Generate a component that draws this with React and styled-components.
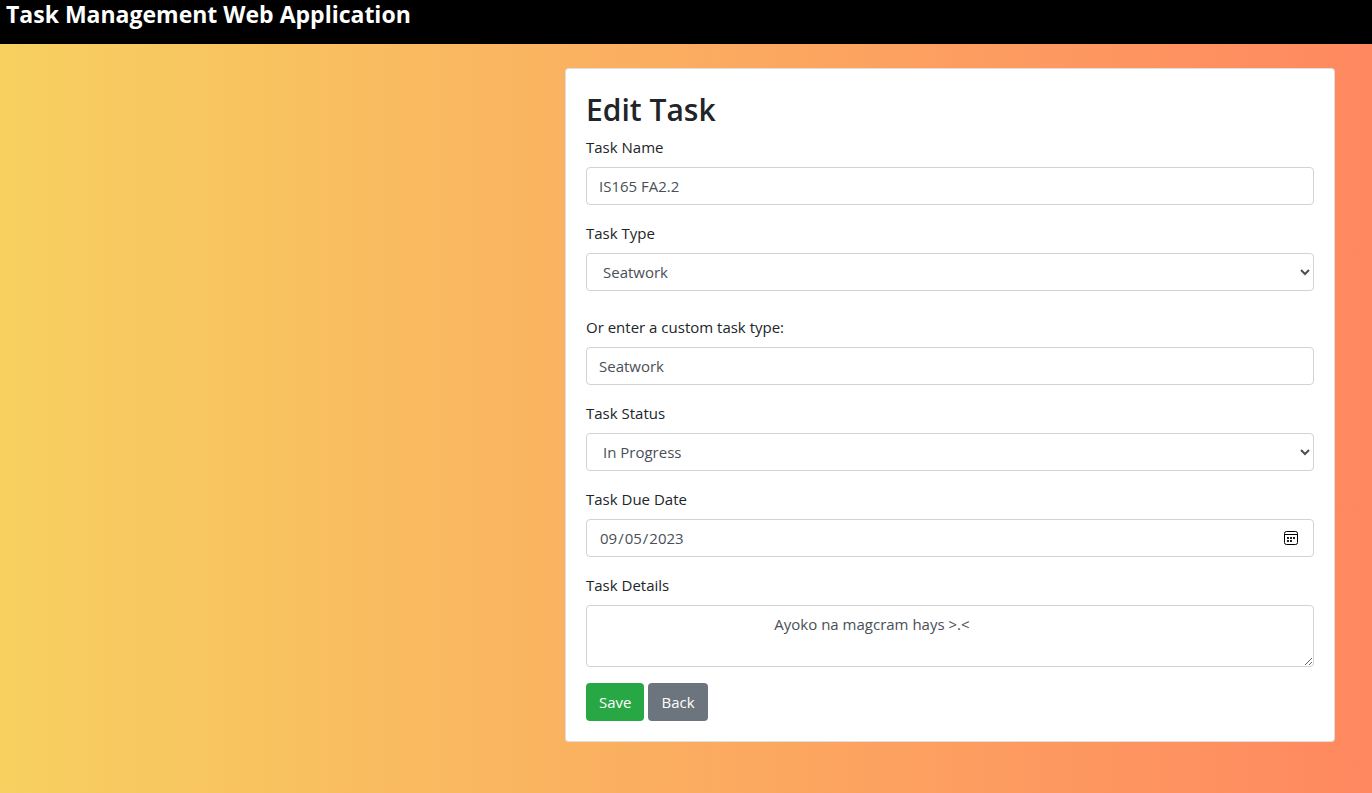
import React from "react";
import styled, { createGlobalStyle, css } from "styled-components";

const GlobalStyle = createGlobalStyle`
  *, *::before, *::after { box-sizing: border-box; }
  body {
    margin: 0;
    min-height: 100vh;
    font: 400 15px/24px "Open Sans", "Noto Sans", sans-serif;
    color: #212529;
    background: linear-gradient(to right, #f7d060, #ff8860);
  }
`;

const Header = styled.header`
  height: 44px;
  padding: 0 6px;
  background: #000;
`;

const Brand = styled.h1`
  margin: 0;
  color: #fff;
  font-size: 23px;
  line-height: 28px;
  font-weight: 700;
`;

const Main = styled.main`
  display: grid;
  grid-template-columns: 565fr 770fr 37fr;
  padding: 24px 0;
`;

const Card = styled.form`
  grid-column: 2;
  padding: 20px;
  background: #fff;
  border: 1px solid rgba(0, 0, 0, 0.125);
  border-radius: 4px;
`;

const Title = styled.h2`
  margin: 0 0 4px;
  font-size: 30px;
  line-height: 42px;
  font-weight: 600;
`;

const Field = styled.div`
  display: flex;
  flex-direction: column;
  gap: 8px;
  margin-bottom: ${(p) => (p.$loose ? 24 : 16)}px;
`;

const control = css`
  width: 100%;
  height: 38px;
  padding: 6px 12px;
  font: inherit;
  color: #495057;
  background: #fff;
  border: 1px solid #ced4da;
  border-radius: 4px;
`;

const Input = styled.input`${control}`;

const calendarIcon = encodeURIComponent(
  `<svg xmlns="http://www.w3.org/2000/svg" width="16" height="16" viewBox="0 0 16 16"><rect x="1.5" y="1.5" width="13" height="13" rx="2" fill="none" stroke="#000"/><path d="M1 4.5h14" stroke="#000"/><path d="M4 7h2v2H4zM7 7h2v2H7zM10 7h2v2h-2zM4 10h2v2H4zM7 10h2v2H7z" fill="#222"/></svg>`
);

const DateInput = styled(Input)`
  &::-webkit-calendar-picker-indicator {
    width: 16px;
    height: 16px;
    padding: 2px;
    box-sizing: content-box;
    background: url("data:image/svg+xml,${calendarIcon}") center / 16px 16px no-repeat;
  }
`;

const Select = styled.select`${control}`;
const TextArea = styled.textarea`
  ${control}
  height: 62px;
  resize: vertical;
`;

const Actions = styled.div`
  display: flex;
  gap: 4px;
`;

const Button = styled.button`
  height: 38px;
  padding: 6px 12px;
  font: inherit;
  color: #fff;
  background: ${(p) => (p.$primary ? "#28a745" : "#6c757d")};
  border: 1px solid transparent;
  border-radius: 4px;
`;

const details = " ".repeat(45) + "Ayoko na magcram hays >.<";

export default function App() {
  return (
    <>
      <GlobalStyle />
      <Header><Brand>Task Management Web Application</Brand></Header>
      <Main>
        <Card onSubmit={(e) => e.preventDefault()}>
          <Title>Edit Task</Title>
          <Field>
            <label htmlFor="name">Task Name</label>
            <Input id="name" defaultValue="IS165 FA2.2" />
          </Field>
          <Field $loose>
            <label htmlFor="type">Task Type</label>
            <Select id="type"><option>Seatwork</option></Select>
          </Field>
          <Field>
            <label htmlFor="custom">Or enter a custom task type:</label>
            <Input id="custom" defaultValue="Seatwork" />
          </Field>
          <Field>
            <label htmlFor="status">Task Status</label>
            <Select id="status"><option>In Progress</option></Select>
          </Field>
          <Field>
            <label htmlFor="due">Task Due Date</label>
            <DateInput id="due" type="date" defaultValue="2023-09-05" />
          </Field>
          <Field>
            <label htmlFor="details">Task Details</label>
            <TextArea id="details" defaultValue={details} />
          </Field>
          <Actions>
            <Button type="submit" $primary>Save</Button>
            <Button type="button">Back</Button>
          </Actions>
        </Card>
      </Main>
    </>
  );
}
